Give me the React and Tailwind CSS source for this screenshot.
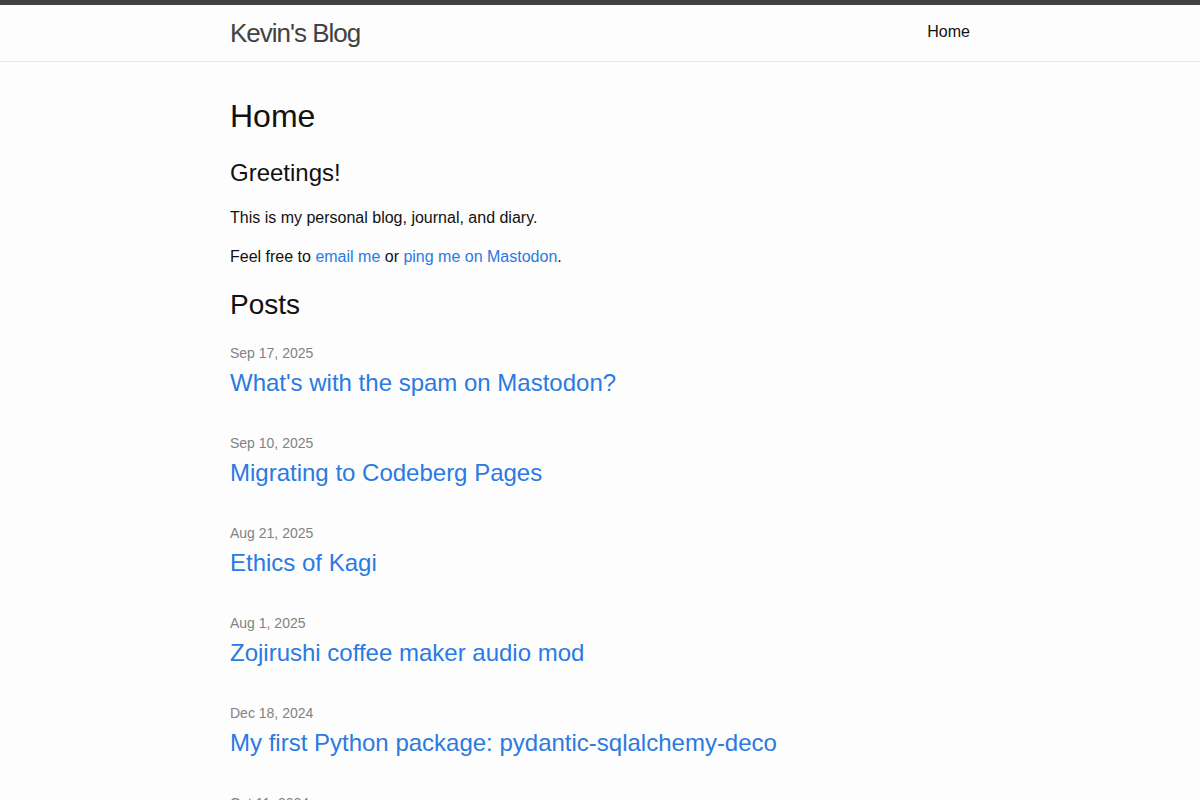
const posts = [
  { date: 'Sep 17, 2025', title: "What's with the spam on Mastodon?" },
  { date: 'Sep 10, 2025', title: 'Migrating to Codeberg Pages' },
  { date: 'Aug 21, 2025', title: 'Ethics of Kagi' },
  { date: 'Aug 1, 2025', title: 'Zojirushi coffee maker audio mod' },
  { date: 'Dec 18, 2024', title: 'My first Python package: pydantic-sqlalchemy-deco' },
  { date: 'Oct 11, 2024', title: 'Self-hosting notes' },
]

function Header() {
  return (
    <header className="border-t-[5px] border-t-[#424242] border-b border-b-[#e8e8e8]">
      <div className="max-w-[800px] mx-auto px-[30px] flex justify-between">
        <a href="#" className="text-[26px] font-light leading-[56px] tracking-[-1px] text-[#424242]">
          Kevin's Blog
        </a>
        <nav className="leading-[54px]">
          <a href="#" className="text-[16px] text-[#111]">Home</a>
        </nav>
      </div>
    </header>
  )
}

export default function App() {
  return (
    <div className="min-h-screen bg-[#fdfdfd] text-[#111] text-[16px] leading-[1.5] font-['Liberation_Sans',Arial,sans-serif]">
      <Header />
      <main className="max-w-[800px] mx-auto px-[30px] py-[30px]">
        <h1 className="text-[32px] leading-[48px] mb-[15px]">Home</h1>
        <h2 className="text-[24px] leading-[36px] mb-[15px]">Greetings!</h2>
        <p className="mb-[15px]">This is my personal blog, journal, and diary.</p>
        <p className="mb-[15px]">
          Feel free to <a href="#" className="text-[#2a7ae2]">email me</a> or{' '}
          <a href="#" className="text-[#2a7ae2]">ping me on Mastodon</a>.
        </p>
        <h2 className="text-[28px] leading-[42px] mb-[15px]">Posts</h2>
        <ul>
          {posts.map((post) => (
            <li key={post.date} className="mb-[30px]">
              <span className="text-[14px] text-[#828282]">{post.date}</span>
              <h3>
                <a href="#" className="block text-[24px] leading-[36px] text-[#2a7ae2]">
                  {post.title}
                </a>
              </h3>
            </li>
          ))}
        </ul>
      </main>
    </div>
  )
}
